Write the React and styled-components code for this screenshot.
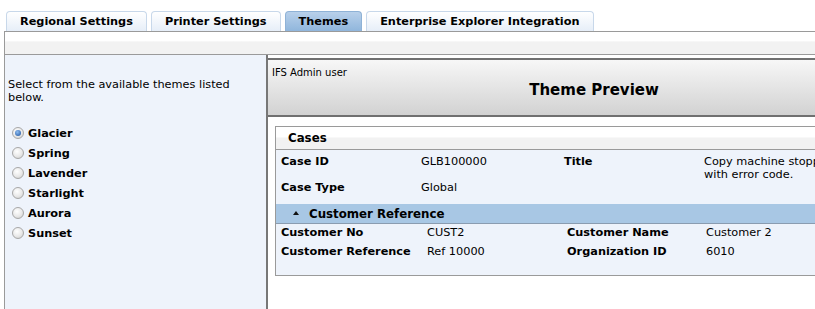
import React from "react";
import styled, { createGlobalStyle } from "styled-components";

const Global = createGlobalStyle`
  html, body { margin: 0; padding: 0; background: #fff; overflow: hidden; }
  body { font-family: "DejaVu Sans", Verdana, sans-serif; font-size: 11.3px; color: #000; }
`;

const Page = styled.div`
  width: 920px;
  height: 309px;
  padding-left: 4px;
  display: flex;
  flex-direction: column;
  box-sizing: border-box;
`;

const TabBar = styled.div`
  display: flex;
  gap: 4px;
  padding: 11px 0 0 2px;
  height: 20px;
`;

const Tab = styled.div`
  height: 20px;
  box-sizing: border-box;
  padding: 0 13px;
  display: flex;
  align-items: center;
  font-weight: bold;
  font-size: 11.3px;
  border: 1px solid ${(p) => (p.$active ? "#8fb2d6" : "#c8d8ea")};
  border-bottom: none;
  border-radius: 4px 4px 0 0;
  background: ${(p) =>
    p.$active
      ? "linear-gradient(#b8d0ea, #90b6dc)"
      : "linear-gradient(#ffffff, #e6eef8)"};
`;

const Toolbar = styled.div`
  height: 22px;
  border-top: 1px solid #9a9a9a;
  border-bottom: 1px solid #9a9a9a;
  border-left: 1px solid #9a9a9a;
  background: linear-gradient(#ffffff 0%, #ffffff 40%, #f2f2f2 45%, #f2f2f2 100%);
`;

const Body = styled.div`
  flex: 1;
  display: flex;
  min-height: 0;
`;

const LeftPanel = styled.div`
  width: 258px;
  background: #eef3fb;
  border-left: 1px solid #9a9a9a;
  padding: 23px 0 0 3px;
`;

const Intro = styled.p`
  margin: 0 0 19px 0;
  line-height: 13px;
  width: 245px;
`;

const RadioRow = styled.label`
  display: flex;
  align-items: center;
  height: 20px;
  padding-left: 4px;
  gap: 4px;
  font-weight: bold;
`;

const Radio = styled.span`
  width: 12px;
  height: 12px;
  border-radius: 50%;
  box-sizing: border-box;
  border: 1px solid #a8a8a8;
  background: radial-gradient(circle at 40% 35%, #ffffff 0%, #e8e8e8 55%, #c8c8c8 100%);
  display: flex;
  align-items: center;
  justify-content: center;
  &::after {
    content: "";
    width: 6px;
    height: 6px;
    border-radius: 50%;
    background: ${(p) => (p.$checked ? "radial-gradient(circle at 40% 35%, #8dbcf0, #1a4f9c)" : "transparent")};
  }
`;

const RightPanel = styled.div`
  flex: 1;
  border-left: 2px solid #777;
  padding-top: 3px;
  background: #fff;
  display: flex;
  flex-direction: column;
`;

const Header = styled.div`
  border-top: 2px solid #707070;
  border-bottom: 2px solid #707070;
  background: linear-gradient(#f7f7f7, #d2d2d2);
  display: flex;
  flex-direction: column;
  padding: 7px 0 0 4px;
  height: 48px;
`;

const User = styled.div`
  font-size: 10px;
  line-height: 12px;
`;

const Title = styled.div`
  text-align: center;
  font-weight: bold;
  font-size: 15px;
  margin-top: 2px;
  padding-right: 4px;
`;

const CasesBox = styled.div`
  margin: 9px 9px 0 7px;
  border: 1px solid #9a9a9a;
  background: #eef3fb;
  padding-bottom: 17px;
`;

const BoxHead = styled.div`
  height: 22px;
  border-bottom: 1px solid #9a9a9a;
  background: linear-gradient(#ffffff 0%, #ffffff 45%, #f2f2f2 50%, #f2f2f2 100%);
  display: flex;
  align-items: center;
  padding-left: 12px;
  font-weight: bold;
  font-size: 11.8px;
`;

const Grid = styled.div`
  display: grid;
  grid-template-columns: ${(p) => p.$cols};
  padding: ${(p) => p.$pad};
  row-gap: ${(p) => p.$gap || 0}px;
  line-height: 13px;
`;

const Label = styled.div`
  font-weight: bold;
  min-height: ${(p) => p.$h || 13}px;
`;

const Value = styled.div`
  min-height: ${(p) => p.$h || 13}px;
`;

const SectionBar = styled.div`
  height: 19px;
  margin-top: 10px;
  background: #a8c7e4;
  border-bottom: 1px solid #8a9cb0;
  display: flex;
  align-items: center;
  gap: 10px;
  padding-left: 17px;
  font-weight: bold;
  font-size: 11.8px;
`;

const Arrow = styled.span`
  width: 0;
  height: 0;
  border-left: 3px solid transparent;
  border-right: 3px solid transparent;
  border-bottom: 4px solid #111;
  margin-bottom: 2px;
`;

const themes = ["Glacier", "Spring", "Lavender", "Starlight", "Aurora", "Sunset"];

export default function App() {
  return (
    <>
      <Global />
      <Page>
        <TabBar>
          <Tab>Regional Settings</Tab>
          <Tab>Printer Settings</Tab>
          <Tab $active>Themes</Tab>
          <Tab>Enterprise Explorer Integration</Tab>
        </TabBar>
        <Toolbar />
        <Body>
          <LeftPanel>
            <Intro>Select from the available themes listed below.</Intro>
            {themes.map((t, i) => (
              <RadioRow key={t}>
                <Radio $checked={i === 0} />
                {t}
              </RadioRow>
            ))}
          </LeftPanel>
          <RightPanel>
            <Header>
              <User>IFS Admin user</User>
              <Title>Theme Preview</Title>
            </Header>
            <CasesBox>
              <BoxHead>Cases</BoxHead>
              <Grid $cols="140px 143px 140px 150px" $pad="5px 0 0 5px">
                <Label $h={26}>Case ID</Label>
                <Value $h={26}>GLB100000</Value>
                <Label $h={26}>Title</Label>
                <Value $h={26}>Copy machine stopped with error code.</Value>
                <Label>Case Type</Label>
                <Value>Global</Value>
                <Label />
                <Value />
              </Grid>
              <SectionBar>
                <Arrow />
                Customer Reference
              </SectionBar>
              <Grid $cols="146px 140px 139px 150px" $pad="2px 0 0 5px" $gap={6}>
                <Label>Customer No</Label>
                <Value>CUST2</Value>
                <Label>Customer Name</Label>
                <Value>Customer 2</Value>
                <Label>Customer Reference</Label>
                <Value>Ref 10000</Value>
                <Label>Organization ID</Label>
                <Value>6010</Value>
              </Grid>
            </CasesBox>
          </RightPanel>
        </Body>
      </Page>
    </>
  );
}
